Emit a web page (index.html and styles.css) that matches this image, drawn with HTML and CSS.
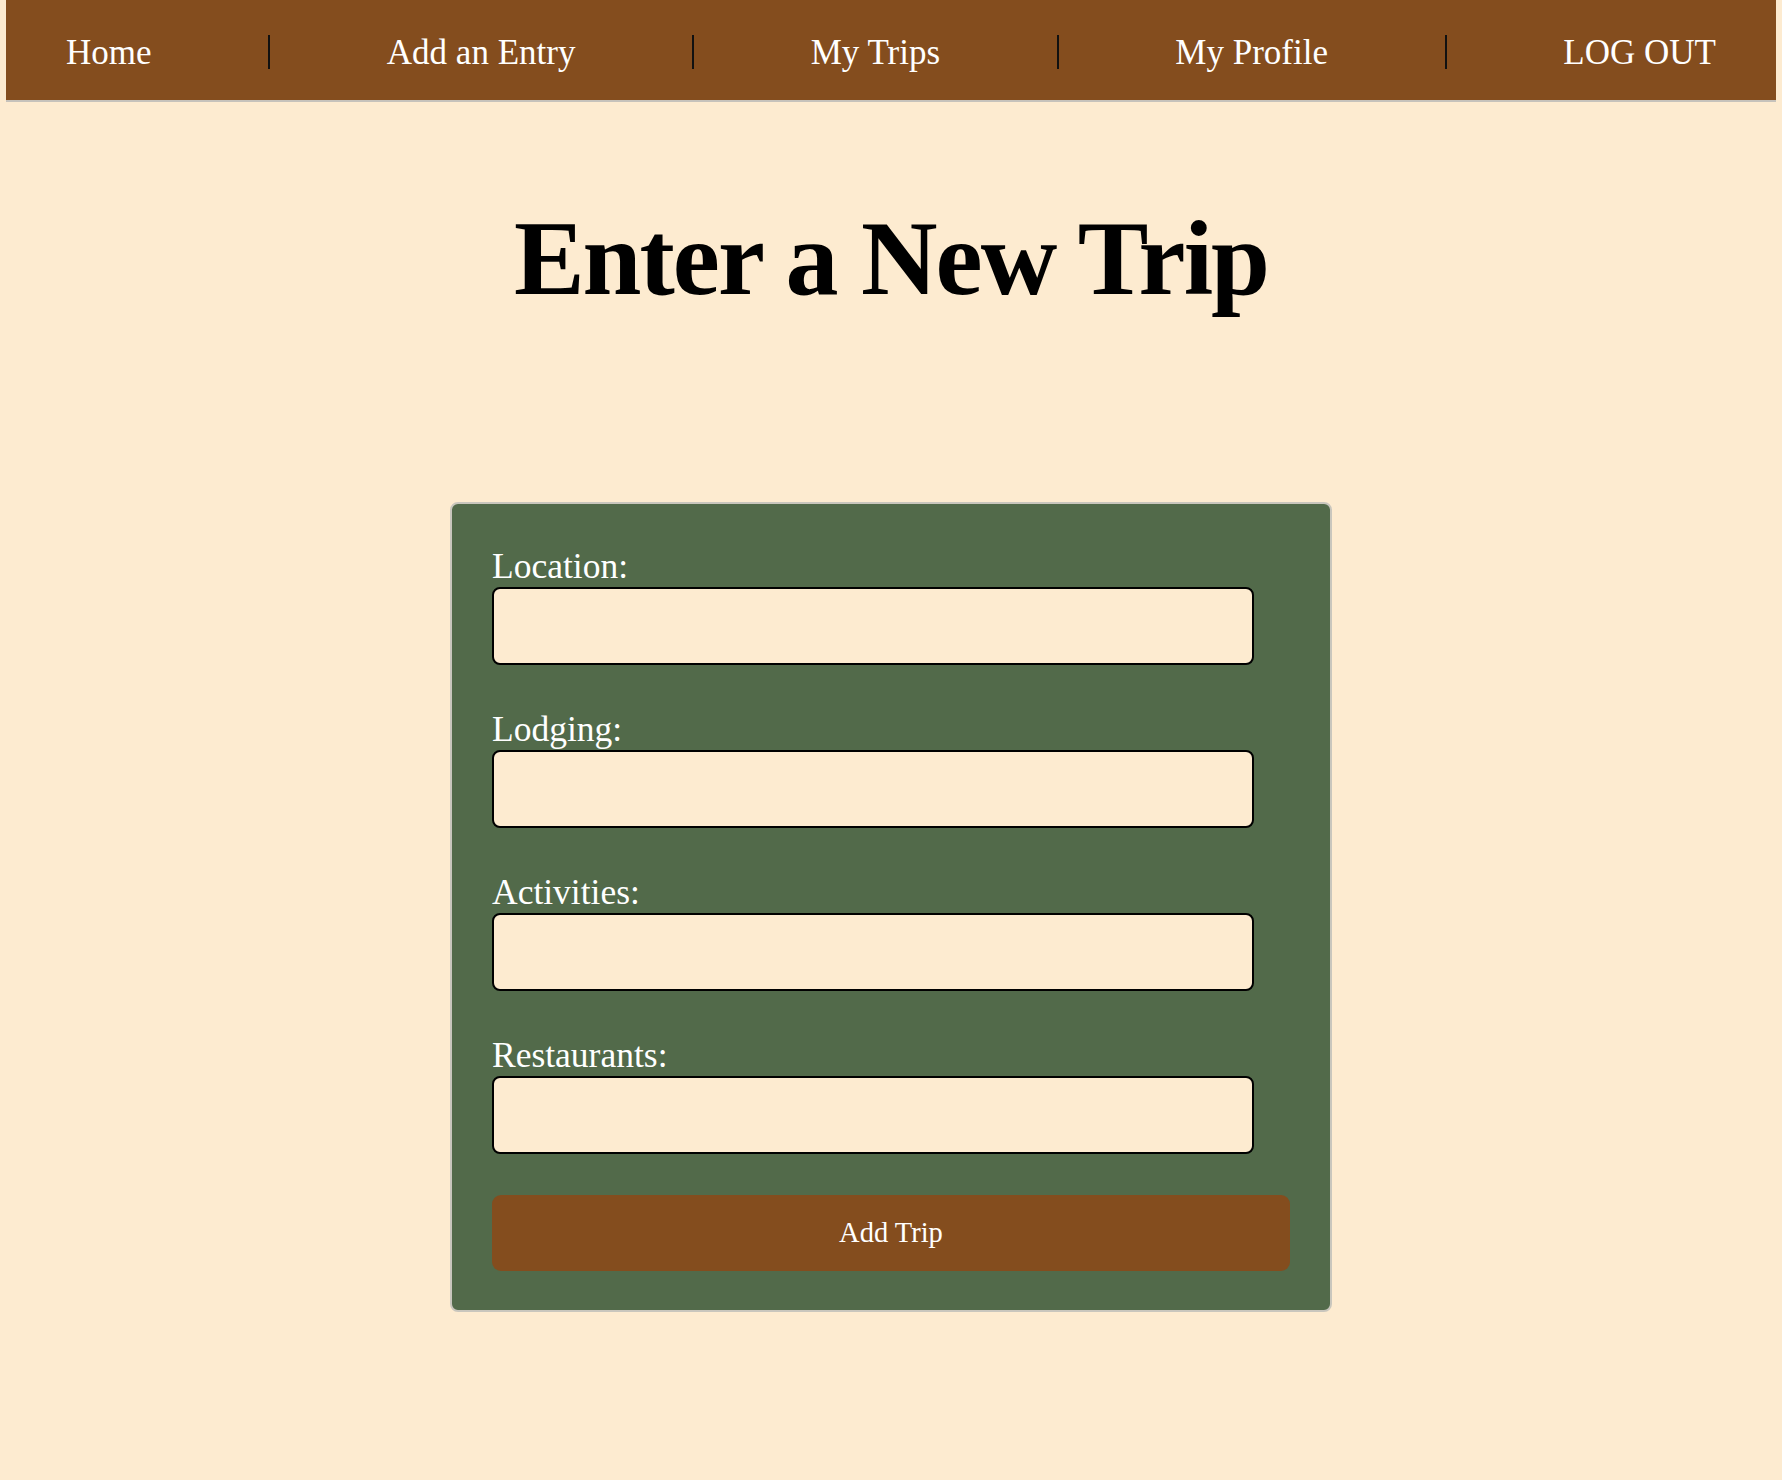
FILE: index.html
```html
<!DOCTYPE html>
<html lang="en">
<head>
<meta charset="utf-8">
<title>Enter a New Trip</title>
<link rel="stylesheet" href="styles.css">
</head>
<body>
<nav class="topnav">
  <a class="nav-link" href="#">Home</a>
  <span class="nav-sep"></span>
  <a class="nav-link" href="#">Add an Entry</a>
  <span class="nav-sep"></span>
  <a class="nav-link" href="#">My Trips</a>
  <span class="nav-sep"></span>
  <a class="nav-link" href="#">My Profile</a>
  <span class="nav-sep"></span>
  <a class="nav-link" href="#">LOG OUT</a>
</nav>
<main class="page">
  <h1 class="title">Enter a New Trip</h1>
  <form class="trip-form">
    <div class="field">
      <label class="field-label" for="location">Location:</label>
      <input class="field-input" id="location" type="text">
    </div>
    <div class="field">
      <label class="field-label" for="lodging">Lodging:</label>
      <input class="field-input" id="lodging" type="text">
    </div>
    <div class="field">
      <label class="field-label" for="activities">Activities:</label>
      <input class="field-input" id="activities" type="text">
    </div>
    <div class="field">
      <label class="field-label" for="restaurants">Restaurants:</label>
      <input class="field-input" id="restaurants" type="text">
    </div>
    <button class="submit-btn" type="button">Add Trip</button>
  </form>
</main>
</body>
</html>
```
FILE: styles.css
```css
html, body {
  margin: 0;
  padding: 0;
  background: #fdebd0;
}
body {
  font-family: "Liberation Serif", "DejaVu Serif", serif;
  color: #000;
}
.topnav {
  margin: 0 6px;
  height: 102px;
  box-sizing: border-box;
  padding: 4px 60px 0;
  background: #844d1e;
  border-bottom: 2px solid #c6c2bb;
  display: flex;
  align-items: center;
  justify-content: space-between;
}
.nav-link {
  color: #fff;
  text-decoration: none;
  font-size: 35px;
  line-height: 39px;
}
.nav-sep {
  width: 2px;
  height: 34px;
  background: #111;
}
.page {
  display: flex;
  flex-direction: column;
  align-items: center;
}
.title {
  margin: 99px 0 186px;
  font-size: 106px;
  line-height: 115px;
  letter-spacing: -2px;
  font-weight: bold;
  text-align: center;
}
.trip-form {
  width: 882px;
  box-sizing: border-box;
  background: #526a4a;
  border: 2px solid #c9c6bd;
  border-radius: 8px;
  padding: 42px 40px 39px;
  display: flex;
  flex-direction: column;
  margin-bottom: 160px;
}
.field {
  display: flex;
  flex-direction: column;
  margin-bottom: 44px;
}
.field:last-of-type {
  margin-bottom: 41px;
}
.field-label {
  color: #fff;
  font-size: 35.5px;
  line-height: 40px;
}
.field-input {
  margin: 1px 0 0;
  width: 762px;
  height: 78px;
  box-sizing: border-box;
  background: #fdebd0;
  border: 2px solid #000;
  border-radius: 8px;
  padding: 0 10px;
  font-family: inherit;
  font-size: 24px;
}
.submit-btn {
  width: 100%;
  height: 76px;
  background: #844d1e;
  color: #fff;
  border: none;
  border-radius: 9px;
  font-family: inherit;
  font-size: 28.5px;
  padding: 0;
  cursor: pointer;
}
```
